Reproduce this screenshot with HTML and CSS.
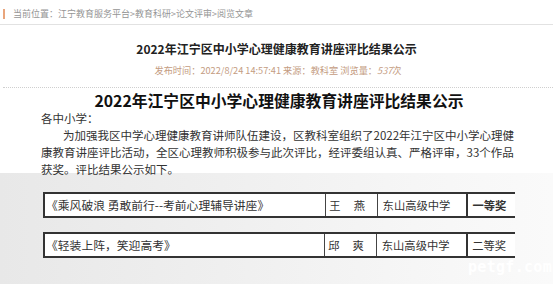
FILE: index.html
```html
<!DOCTYPE html>
<html lang="zh-CN">
<head>
<meta charset="utf-8">
<link rel="stylesheet" href="styles.css">
</head>
<body>
<div class="crumb"><span class="bar"></span><span class="crumb-text">当前位置：江宁教育服务平台&gt;教育科研&gt;论文评审&gt;阅览文章</span></div>
<h1 class="title">2022年江宁区中小学心理健康教育讲座评比结果公示</h1>
<div class="meta-wrap"><div class="meta">发布时间：2022/8/24 14:57:41 来源：教科室 浏览量：<i>537</i>次</div></div>
<h2 class="headline">2022年江宁区中小学心理健康教育讲座评比结果公示</h2>
<p class="greet">各中小学：</p>
<p class="body">为加强我区中学心理健康教育讲师队伍建设，区教科室组织了2022年江宁区中小学心理健康教育讲座评比活动，全区心理教师积极参与此次评比，经评委组认真、严格评审，33个作品获奖。评比结果公示如下。</p>
<div class="pic">
  <table class="row">
    <tr><td class="c-title">《乘风破浪 勇敢前行--考前心理辅导讲座》</td><td class="c-name"><span>王</span><span>燕</span></td><td class="c-school">东山高级中学</td><td class="c-award strong">一等奖</td></tr>
  </table>
  <table class="row">
    <tr><td class="c-title">《轻装上阵，笑迎高考》</td><td class="c-name"><span>邱</span><span>爽</span></td><td class="c-school">东山高级中学</td><td class="c-award">二等奖</td></tr>
  </table>
</div>
<div class="watermark">petgf.com</div>
</body>
</html>
```
FILE: styles.css
```css
html, body { margin: 0; padding: 0; background: #fff; overflow: hidden; }
body { position: relative; width: 553px; height: 284px; font-family: "Noto Sans CJK SC", "Noto Sans", sans-serif; color: #333; }

.crumb { height: 25px; box-sizing: border-box; padding: 4px 0 0 3px; display: flex; align-items: center; border-bottom: 1px solid #e2e2e2; }
.bar { width: 2px; height: 10px; background: #e9a57c; margin-right: 8px; }
.crumb-text { font-size: 9px; line-height: 12px; color: #959595; }

.title { margin: 16px 0 0; font-size: 12px; line-height: 16px; font-weight: bold; text-align: center; color: #222; }

.meta-wrap { margin: 6px 0 0 3px; padding-bottom: 10px; border-bottom: 1px dotted #cfcfcf; }
.meta { font-size: 9.2px; line-height: 14px; color: #c49c82; text-align: center; }
.meta i { font-style: italic; }

.headline { margin: 4px 0 0; font-size: 15.8px; line-height: 18px; font-weight: bold; text-align: center; color: #111; padding-left: 5px; }

.greet { margin: 0 0 0 41px; font-size: 11.5px; line-height: 17px; color: #333; }
.body { margin: 0 0 0 41px; width: 478px; font-size: 11.5px; line-height: 17px; text-indent: 22px; color: #333; }

.pic { margin-top: -5px; height: 120px; box-sizing: border-box; padding: 19px 0 0 43px; background: linear-gradient(90deg, #e8e8e8 0%, #efefef 40%, #f6f6f6 75%, #fafafa 100%); }
.row { border-collapse: collapse; width: 472px; background: #fff; margin-bottom: 14px; border-top: 2px solid #333; border-bottom: 2px solid #333; border-left: 2px solid #333; }
.row td { height: 22px; padding: 0 3px; font-size: 11.3px; line-height: 22px; color: #333; border-left: 1px solid #444; white-space: nowrap; }
.row td.c-title { width: 281px; padding-left: 1px; font-size: 11.8px; }
.c-name { width: 45px; }
.c-name span { display: inline-block; }
.c-name span + span { margin-left: 13px; }
.c-school { width: 82px; padding-left: 5px !important; }
.c-award { width: 40px; border-left: 2px solid #333 !important; padding-left: 4px !important; }
.strong { font-weight: bold; }

.watermark { position: absolute; left: 468px; top: 259px; font-family: "DejaVu Sans Mono", monospace; font-weight: bold; font-size: 15px; line-height: 16px; color: #fff; letter-spacing: 0.3px; }
```
